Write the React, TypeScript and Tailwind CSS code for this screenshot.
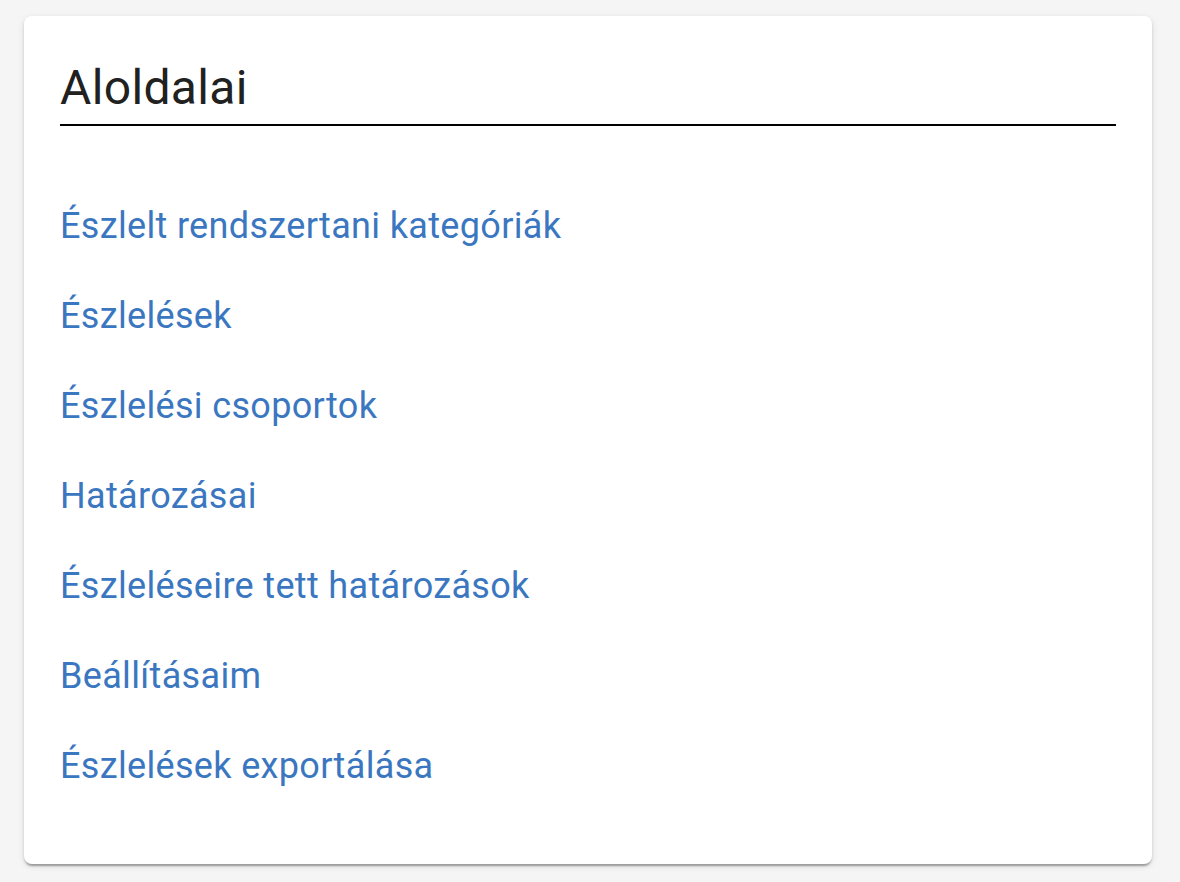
const links = [
    'Észlelt rendszertani kategóriák',
    'Észlelések',
    'Észlelési csoportok',
    'Határozásai',
    'Észleléseire tett határozások',
    'Beállításaim',
    'Észlelések exportálása',
]

export default function App() {
    return (
        <div className="min-h-screen bg-[#f5f5f5] pt-[16px] pl-[24px] pr-[28px] font-['Roboto',sans-serif]">
            <div className="bg-white rounded-[8px] shadow-[0_4px_2px_-2px_rgba(0,0,0,0.2),0_2px_2px_0_rgba(0,0,0,0.14),0_2px_6px_0_rgba(0,0,0,0.12)] px-[36px] pt-[44px] pb-[77px]">
                <h2 className="text-[48px] leading-[56px] tracking-[0.00735em] text-[#212121] font-normal pb-[8px] border-b-2 border-black">
                    Aloldalai
                </h2>
                <ul className="mt-[79px] flex flex-col gap-[48px]">
                    {links.map((l) => (
                        <li key={l}>
                            <a href="#" className="text-[36px] leading-[42px] tracking-[0.00938em] text-[#3b77c0]">
                                {l}
                            </a>
                        </li>
                    ))}
                </ul>
            </div>
        </div>
    )
}
